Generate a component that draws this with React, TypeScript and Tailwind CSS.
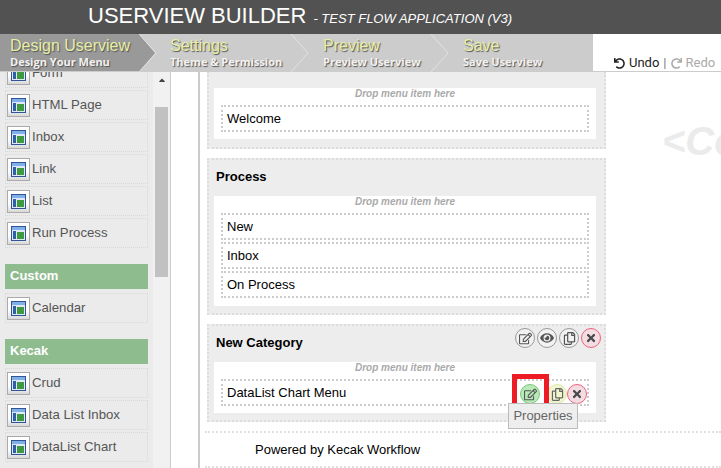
import React from "react";
import { FaUndo, FaRedo, FaTimes, FaEye, FaRegCopy, FaRegEdit, FaCaretUp } from "react-icons/fa";

const shadow = { textShadow: "1px 1px 1px #555" };

function Step({ title, sub, w, active, pl, last }: { title: string; sub: string; w: string; active?: boolean; pl: string; last?: boolean }) {
  return (
    <div className={`relative h-full flex flex-col ${w} ${pl} ${active ? "bg-[#999999]" : ""}`}>
      <span className="text-[16px] leading-[18px] mt-[3px] text-[#e6efa6] font-['Liberation_Sans']" style={shadow}>{title}</span>
      <span className="text-[11px] leading-[13px] font-bold text-[#f2f2f2] font-['Open_Sans']" style={shadow}>{sub}</span>
      {last ? null : (
        <svg className="absolute top-0 right-[-18px] z-10" width="19" height="38" viewBox="0 0 19 38">
          {active ? <path d="M0 0 L16 19 L0 38 Z" fill="#999999" /> : null}
          <path d="M0 0 L17 19 L0 38" fill="none" stroke="#e2e2e2" strokeWidth="1" />
        </svg>
      )}
    </div>
  );
}

function PageIcon() {
  return (
    <span className="w-[23px] h-[23px] shrink-0 border border-[#aaa] bg-[linear-gradient(#fff,#fff_60%,#d8d8d8)] flex items-center justify-center">
      <svg width="15" height="15" viewBox="0 0 15 15">
        <rect x="0.5" y="0.5" width="14" height="14" fill="#dfe9f7" stroke="#2f5597" />
        <rect x="1" y="1" width="13" height="3" fill="#7fb0e8" />
        <rect x="2" y="5" width="3" height="8" fill="#2f5fa8" />
        <rect x="6" y="6" width="7" height="7" fill="#3f9a3f" />
      </svg>
    </span>
  );
}

function Element({ label }: { label: string }) {
  return (
    <div className="h-[30px] mb-[2px] flex items-center gap-[2px] pl-px border border-dotted border-[#d8d8d8] text-[13.2px] text-[#555]">
      <PageIcon />
      <span>{label}</span>
    </div>
  );
}

function Group({ label, mb }: { label: string; mb: string }) {
  return <div className={`h-[25px] ${mb} bg-[#8fbc8f] px-[5px] leading-[24px] text-[13px] font-bold text-white`}>{label}</div>;
}

function Circle({ c, children }: { c: string; children: React.ReactNode }) {
  return <span className={`w-[20px] h-[20px] rounded-full border flex items-center justify-center ${c}`}>{children}</span>;
}

const gray = "border-[#999] bg-[#f2f2f2] text-[#555]";
const red = "border-[#f0607f] bg-[#f4dde2] text-[#4a4a4a]";

function Item({ label }: { label: string }) {
  return (
    <div className="h-[27px] mb-[2px] last:mb-0 border-2 border-dotted border-[#cccccc] pl-[4px] leading-[24px] text-[13px] text-black">
      {label}
    </div>
  );
}

function Drop({ items, h }: { items: string[]; h: string }) {
  return (
    <div className={`bg-white ml-[5px] mr-[8px] px-[7px] ${h}`}>
      <div className="h-[17px] text-center text-[10px] leading-[11px] font-bold italic text-[#aaa]">Drop menu item here</div>
      {items.map((i) => <Item key={i} label={i} />)}
    </div>
  );
}

export default function App() {
  return (
    <div className="w-[721px] h-[468px] overflow-hidden flex flex-col bg-white font-['Liberation_Sans',sans-serif]">
      <header className="h-[34px] shrink-0 bg-[#525252] pl-[88px] flex items-baseline text-white">
        <span className="text-[22px] leading-[31px]">USERVIEW BUILDER</span>
        <span className="ml-[7px] text-[13px] italic">- TEST FLOW APPLICATION (V3)</span>
      </header>

      <nav className="h-[38px] shrink-0 flex border-b border-[#ccc]">
        <div className="w-[593px] h-full bg-[#cccccc] flex">
          <Step active title="Design Userview" sub="Design Your Menu" w="w-[140px]" pl="pl-[10px]" />
          <Step title="Settings" sub="Theme & Permission" w="w-[152px]" pl="pl-[30px]" />
          <Step title="Preview" sub="Preview Userview" w="w-[140px]" pl="pl-[31px]" />
          <Step last title="Save" sub="Save Userview" w="w-[161px]" pl="pl-[31px]" />
        </div>
        <div className="flex-1 flex items-end pl-[21px] gap-[4px] text-[13px] leading-[16px] font-['Roboto'] text-[#222]">
          <FaUndo className="w-[11px] h-[11px] mb-[2px]" />
          <span>Undo</span>
          <span className="text-[#777]">|</span>
          <FaRedo className="w-[11px] h-[11px] mb-[2px] text-[#aaa]" />
          <span className="text-[#aaa]">Redo</span>
        </div>
      </nav>

      <main className="flex-1 min-h-0 flex">
        <aside className="w-[171px] shrink-0 flex border-r border-[#ccc] bg-[#ebebeb] overflow-hidden">
          <div className="w-[143px] ml-[5px] mt-[-14px] shrink-0">
            <Element label="Form" />
            <Element label="HTML Page" />
            <Element label="Inbox" />
            <Element label="Link" />
            <Element label="List" />
            <Element label="Run Process" />
            <div className="h-[14px]" />
            <Group label="Custom" mb="mb-[4px]" />
            <Element label="Calendar" />
            <div className="h-[14px]" />
            <Group label="Kecak" mb="mb-[4px]" />
            <Element label="Crud" />
            <Element label="Data List Inbox" />
            <Element label="DataList Chart" />
          </div>
          <div className="ml-[5px] w-[18px] bg-[#f1f1f1] flex flex-col items-center">
            <FaCaretUp className="w-[10px] h-[10px] mt-[3px] text-[#444]" />
            <div className="w-[13px] h-[170px] mt-[22px] bg-[#c1c1c1]" />
          </div>
        </aside>
        <div className="w-[29px] shrink-0 bg-white border-r-2 border-[#ccc]" />
        <section className="flex-1 min-w-0 relative overflow-hidden">
          <div className="ml-[7px] w-[399px] pt-0">
            <div className="h-[77px] border-2 border-dotted border-[#dcdcdc] border-t-0 bg-[#ededed] pt-[16px]">
              <Drop items={["Welcome"]} h="h-[51px]" />
            </div>
            <div className="h-[157px] mt-[9px] border-2 border-dotted border-[#dcdcdc] bg-[#ededed]">
              <div className="h-[36px] pl-[7px] pt-[8px] text-[13px] leading-[18px] font-bold text-black">Process</div>
              <Drop items={["New", "Inbox", "On Process"]} h="h-[110px]" />
            </div>
            <div className="relative h-[98px] mt-[9px] border-2 border-dotted border-[#dcdcdc] bg-[#ededed]">
              <div className="h-[36px] pl-[7px] pt-[8px] text-[13px] leading-[18px] font-bold text-black">New Category</div>
              <Drop items={["DataList Chart Menu"]} h="h-[51px]" />
              <div className="absolute top-[2px] right-[3px] flex gap-[2px]">
                <Circle c={gray}><FaRegEdit className="w-[13px] h-[13px]" /></Circle>
                <Circle c={gray}><FaEye className="w-[14px] h-[14px]" /></Circle>
                <Circle c={gray}><FaRegCopy className="w-[13px] h-[13px]" /></Circle>
                <Circle c={red}><FaTimes className="w-[12px] h-[12px]" /></Circle>
              </div>
              <div className="absolute top-[58px] left-[311px] flex gap-[7px]">
                <Circle c="border-[#79c879] bg-[#b8eab8] text-[#555]"><FaRegEdit className="w-[13px] h-[13px]" /></Circle>
                <div className="flex">
                  <Circle c="border-[#dfe8a8] bg-[#f2f6cf] text-[#666]"><FaRegCopy className="w-[13px] h-[13px]" /></Circle>
                  <Circle c={red}><FaTimes className="w-[12px] h-[12px]" /></Circle>
                </div>
              </div>
            </div>
          </div>
          <footer className="mt-[9px] ml-[5px] h-[37px] border-y-2 border-dotted border-[#e0e0e0] pl-[50px] leading-[33px] text-[13px] text-black">
            Powered by Kecak Workflow
          </footer>
          <div className="absolute top-[46px] left-[462px] text-[40px] leading-[46px] font-bold italic text-[#ebebeb]">&lt;Co</div>
          <div className="absolute top-[302px] left-[312px] w-[37px] h-[34px] border-[5px] border-[#ed1c24]" />
          <div className="absolute top-[331px] left-[308px] w-[70px] h-[26px] border border-[#bbb] bg-[#eeeeee] text-center text-[13px] leading-[24px] text-[#666]">Properties</div>
        </section>
      </main>
    </div>
  );
}
